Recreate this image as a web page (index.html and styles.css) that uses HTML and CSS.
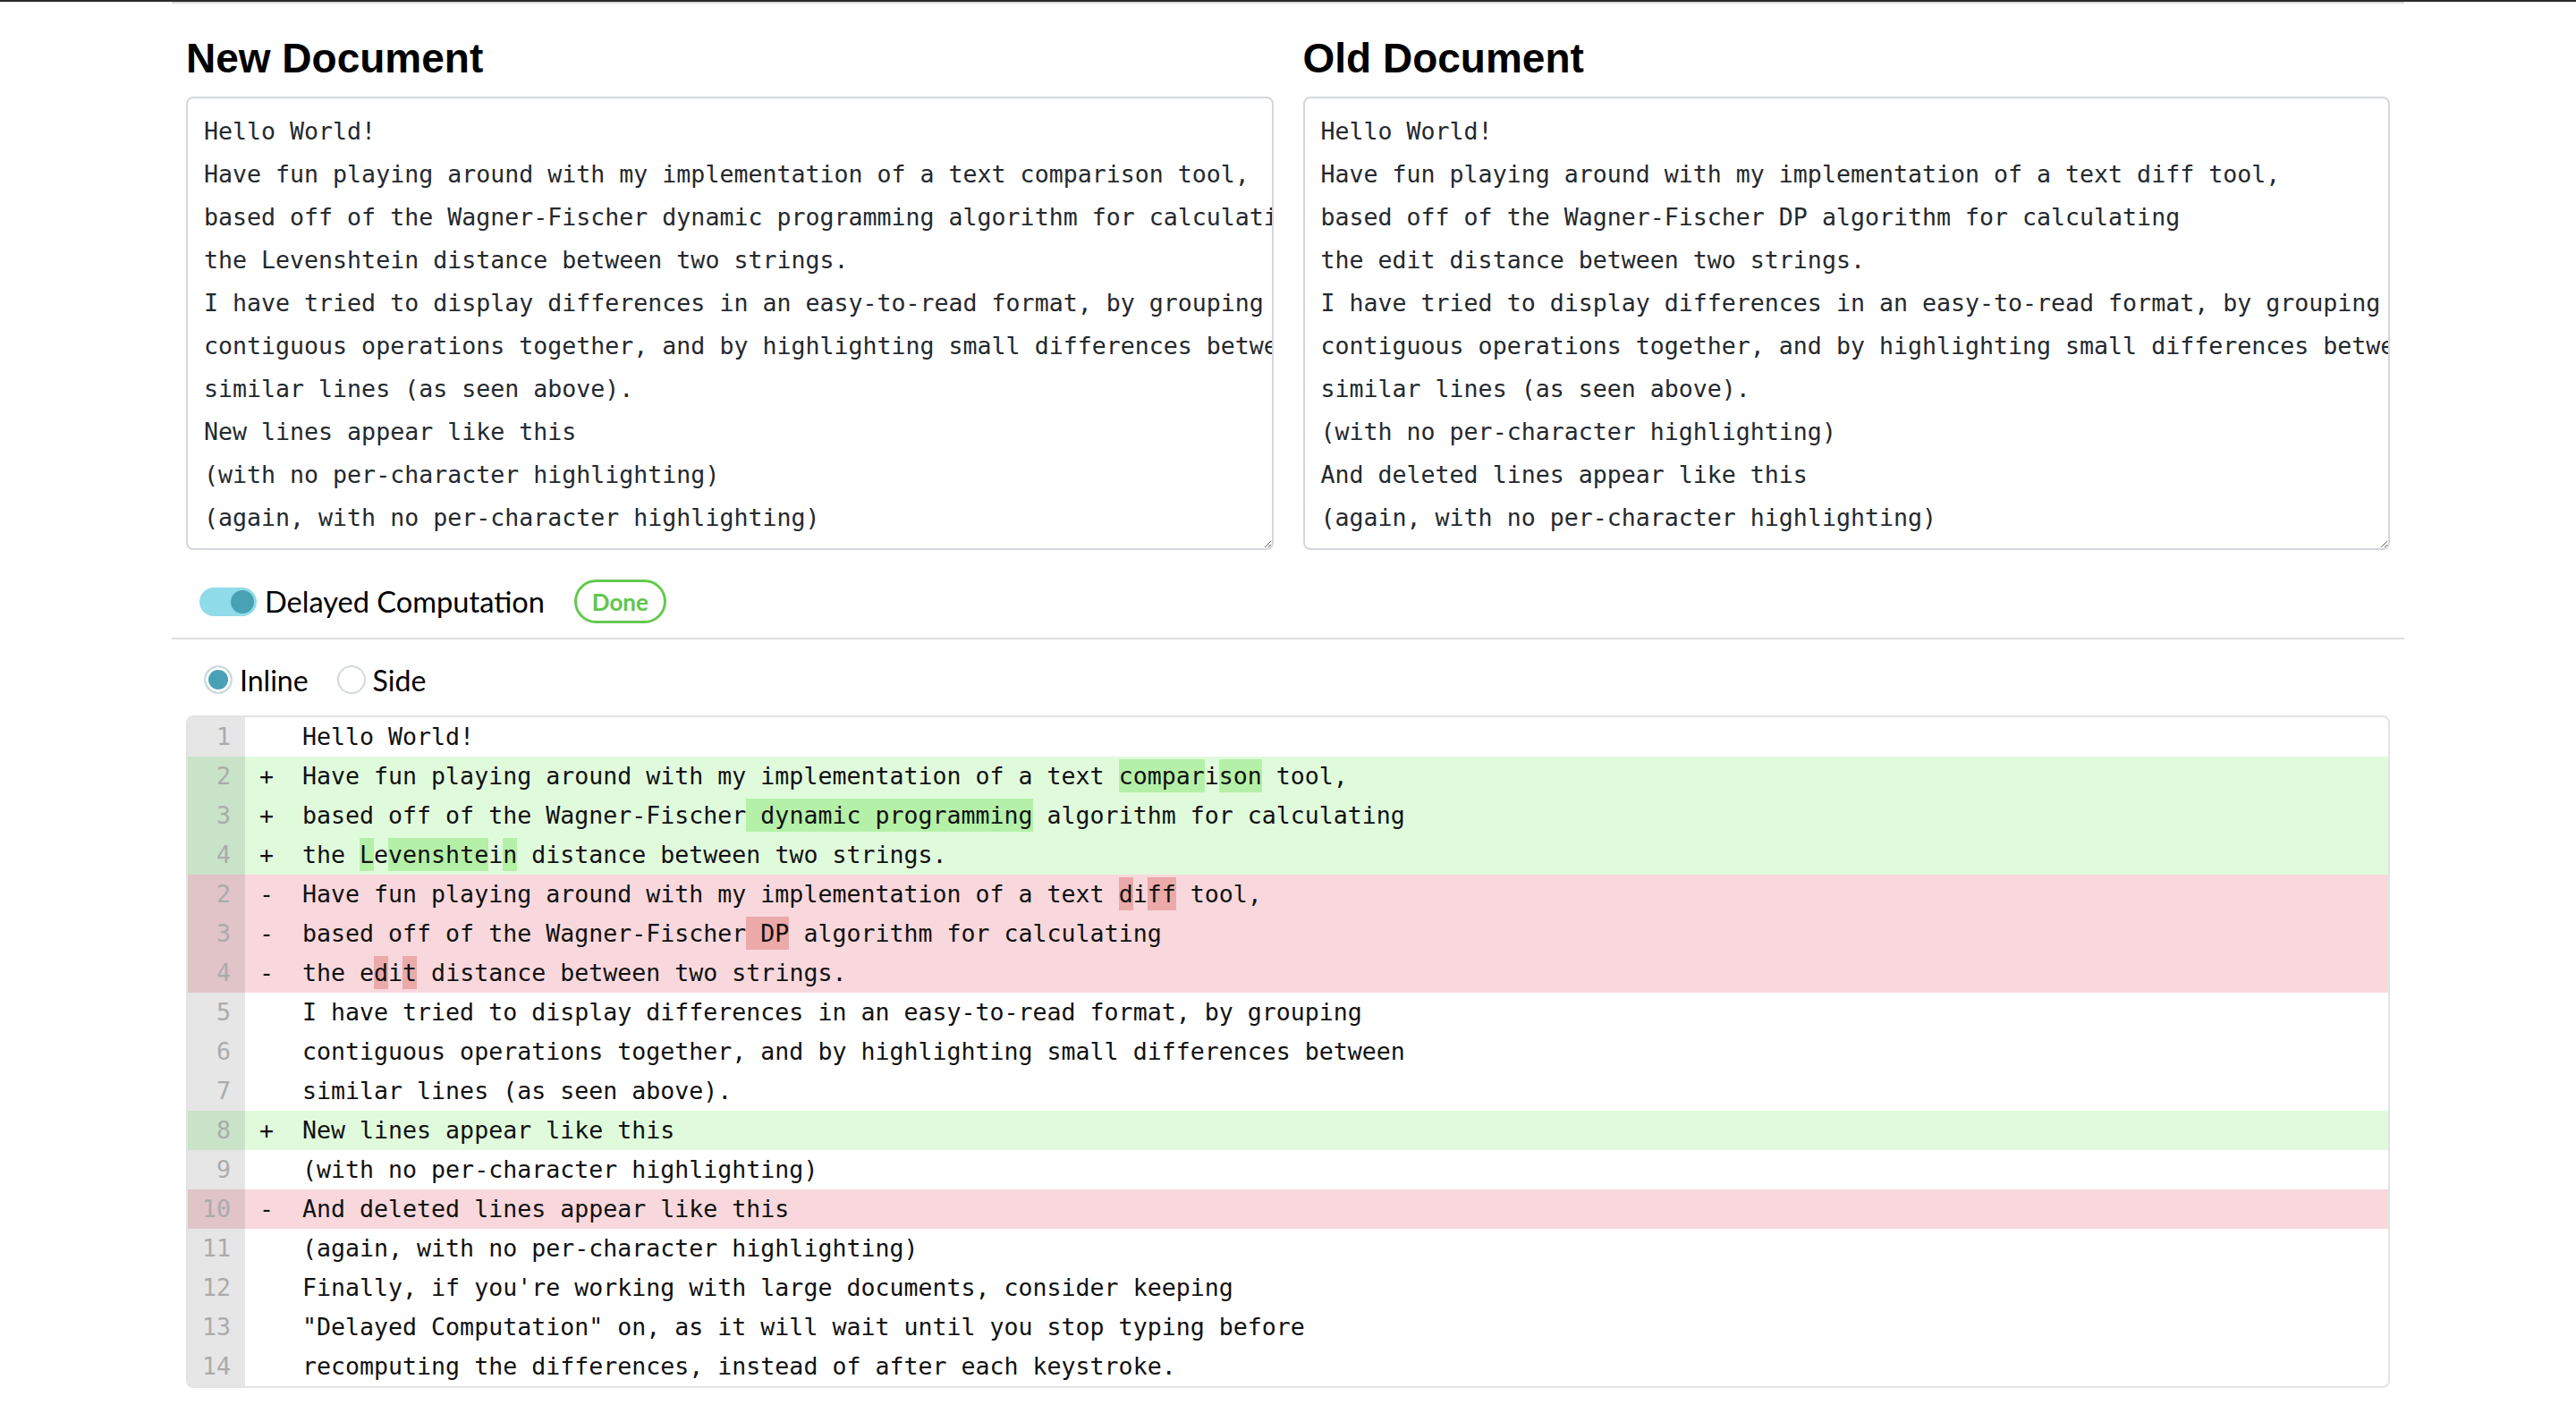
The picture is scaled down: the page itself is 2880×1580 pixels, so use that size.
FILE: index.html
```html
<!DOCTYPE html>
<html lang="en">
<head>
<meta charset="utf-8">
<title>Text Diff</title>
<link rel="stylesheet" href="styles.css">
</head>
<body>
<div class="topbar"></div>
<main class="app">
  <section class="docs">
    <div class="doc">
      <h2 class="doc-title">New Document</h2>
      <textarea class="doc-input" wrap="off" spellcheck="false">Hello World!
Have fun playing around with my implementation of a text comparison tool,
based off of the Wagner-Fischer dynamic programming algorithm for calculating
the Levenshtein distance between two strings.
I have tried to display differences in an easy-to-read format, by grouping
contiguous operations together, and by highlighting small differences between
similar lines (as seen above).
New lines appear like this
(with no per-character highlighting)
(again, with no per-character highlighting)
Finally, if you're working with large documents, consider keeping
"Delayed Computation" on, as it will wait until you stop typing before
recomputing the differences, instead of after each keystroke.</textarea>
    </div>
    <div class="doc">
      <h2 class="doc-title">Old Document</h2>
      <textarea class="doc-input" wrap="off" spellcheck="false">Hello World!
Have fun playing around with my implementation of a text diff tool,
based off of the Wagner-Fischer DP algorithm for calculating
the edit distance between two strings.
I have tried to display differences in an easy-to-read format, by grouping
contiguous operations together, and by highlighting small differences between
similar lines (as seen above).
(with no per-character highlighting)
And deleted lines appear like this
(again, with no per-character highlighting)
Finally, if you're working with large documents, consider keeping
"Delayed Computation" on, as it will wait until you stop typing before
recomputing the differences, instead of after each keystroke.</textarea>
    </div>
  </section>

  <div class="controls">
    <span class="toggle"><span class="knob"></span></span>
    <span class="toggle-label">Delayed Computation</span>
    <span class="status">Done</span>
  </div>

  <hr class="divider">

  <div class="modes">
    <label class="mode"><span class="radio checked"></span>Inline</label>
    <label class="mode"><span class="radio"></span>Side</label>
  </div>

  <div class="diff">
    <div class="row"><span class="ln">1</span><span class="sign"></span><span class="code">Hello World!</span></div>
    <div class="row add"><span class="ln">2</span><span class="sign">+</span><span class="code">Have fun playing around with my implementation of a text <span class="hl">compar</span>i<span class="hl">son</span> tool,</span></div>
    <div class="row add"><span class="ln">3</span><span class="sign">+</span><span class="code">based off of the Wagner-Fischer<span class="hl"> dynamic programming</span> algorithm for calculating</span></div>
    <div class="row add"><span class="ln">4</span><span class="sign">+</span><span class="code">the <span class="hl">L</span>e<span class="hl">venshte</span>i<span class="hl">n</span> distance between two strings.</span></div>
    <div class="row del"><span class="ln">2</span><span class="sign">-</span><span class="code">Have fun playing around with my implementation of a text <span class="hl">d</span>i<span class="hl">ff</span> tool,</span></div>
    <div class="row del"><span class="ln">3</span><span class="sign">-</span><span class="code">based off of the Wagner-Fischer<span class="hl"> DP</span> algorithm for calculating</span></div>
    <div class="row del"><span class="ln">4</span><span class="sign">-</span><span class="code">the e<span class="hl">d</span>i<span class="hl">t</span> distance between two strings.</span></div>
    <div class="row"><span class="ln">5</span><span class="sign"></span><span class="code">I have tried to display differences in an easy-to-read format, by grouping</span></div>
    <div class="row"><span class="ln">6</span><span class="sign"></span><span class="code">contiguous operations together, and by highlighting small differences between</span></div>
    <div class="row"><span class="ln">7</span><span class="sign"></span><span class="code">similar lines (as seen above).</span></div>
    <div class="row add"><span class="ln">8</span><span class="sign">+</span><span class="code">New lines appear like this</span></div>
    <div class="row"><span class="ln">9</span><span class="sign"></span><span class="code">(with no per-character highlighting)</span></div>
    <div class="row del"><span class="ln">10</span><span class="sign">-</span><span class="code">And deleted lines appear like this</span></div>
    <div class="row"><span class="ln">11</span><span class="sign"></span><span class="code">(again, with no per-character highlighting)</span></div>
    <div class="row"><span class="ln">12</span><span class="sign"></span><span class="code">Finally, if you're working with large documents, consider keeping</span></div>
    <div class="row"><span class="ln">13</span><span class="sign"></span><span class="code">"Delayed Computation" on, as it will wait until you stop typing before</span></div>
    <div class="row"><span class="ln">14</span><span class="sign"></span><span class="code">recomputing the differences, instead of after each keystroke.</span></div>
  </div>
</main>
</body>
</html>
```

FILE: styles.css
```css
* {
  box-sizing: border-box;
}

html,
body {
  margin: 0;
  padding: 0;
  background: #ffffff;
}

body {
  font-family: Lato, "Noto Sans", sans-serif;
  color: #111111;
}

.topbar {
  height: 2px;
  background: #2b2b2b;
}

.app {
  margin: 0 192px;
  border-top: 2px solid #d9d9d9;
}

/* documents */
.docs {
  display: grid;
  grid-template-columns: 1fr 1fr;
  column-gap: 33px;
  padding: 0 16px;
}

.doc-title {
  font-family: "Liberation Sans", Arial, sans-serif;
  font-weight: 700;
  font-size: 46px;
  line-height: 56px;
  margin: 33px 0 15px;
  color: #000000;
}

.doc-input {
  display: block;
  width: 100%;
  height: 507px;
  margin: 0;
  padding: 13px 18px;
  border: 2px solid #d3d7dd;
  border-radius: 8px;
  font-family: "DejaVu Sans Mono", "Liberation Mono", monospace;
  font-size: 26.6px;
  line-height: 48px;
  color: #24292e;
  background: #ffffff;
  overflow: hidden;
  white-space: pre;
  resize: both;
  outline: none;
}

/* controls */
.controls {
  display: flex;
  align-items: center;
  height: 49px;
  margin-top: 33px;
  padding-left: 31px;
}

.toggle {
  display: flex;
  align-items: center;
  justify-content: flex-end;
  width: 64px;
  height: 32px;
  padding: 0 3px;
  border-radius: 16px;
  background: #8fdbea;
}

.knob {
  width: 26px;
  height: 26px;
  border-radius: 50%;
  background: #49a1b4;
}

.toggle-label {
  margin-left: 9px;
  font-size: 32.6px;
  color: #000000;
}

.status {
  display: flex;
  align-items: center;
  justify-content: center;
  width: 103px;
  height: 49px;
  margin-left: 33px;
  border: 3px solid #64c94f;
  border-radius: 25px;
  color: #5fc64a;
  font-weight: 700;
  font-size: 26px;
}

.divider {
  height: 2px;
  margin: 16px 0 0;
  border: 0;
  background: #dedede;
}

/* mode */
.modes {
  display: flex;
  align-items: center;
  gap: 32px;
  height: 32px;
  margin-top: 29px;
  padding-left: 36px;
}

.mode {
  display: flex;
  align-items: center;
  gap: 8px;
  font-size: 32px;
  color: #000000;
}

.radio {
  width: 32px;
  height: 32px;
  border-radius: 50%;
  border: 2px solid #d3d8df;
  background: #ffffff;
}

.radio.checked {
  background: #4aa0b4;
  box-shadow: inset 0 0 0 3px #ffffff;
}

/* diff */
.diff {
  margin: 24px 16px 0;
  border: 2px solid #e3e3e3;
  border-radius: 8px;
  overflow: hidden;
  font-family: "DejaVu Sans Mono", "Liberation Mono", monospace;
  font-size: 26.6px;
  line-height: 44px;
  color: #111111;
}

.row {
  display: flex;
  height: 44px;
  white-space: pre;
}

.ln {
  flex: none;
  width: 64px;
  padding-right: 16px;
  text-align: right;
  color: #ababab;
  background: #e6e6e6;
}

.sign {
  flex: none;
  width: 48px;
  margin-left: 16px;
}

.row.add {
  background: #e0fbdc;
}

.row.add .ln {
  background: #c8e3c7;
}

.row.del {
  background: #f8d8dc;
}

.row.del .ln {
  background: #e0c4c8;
}

.hl {
  padding: 3px 0;
}

.row.add .hl {
  background: #b5f0a8;
}

.row.del .hl {
  background: #eba9a9;
}
```
